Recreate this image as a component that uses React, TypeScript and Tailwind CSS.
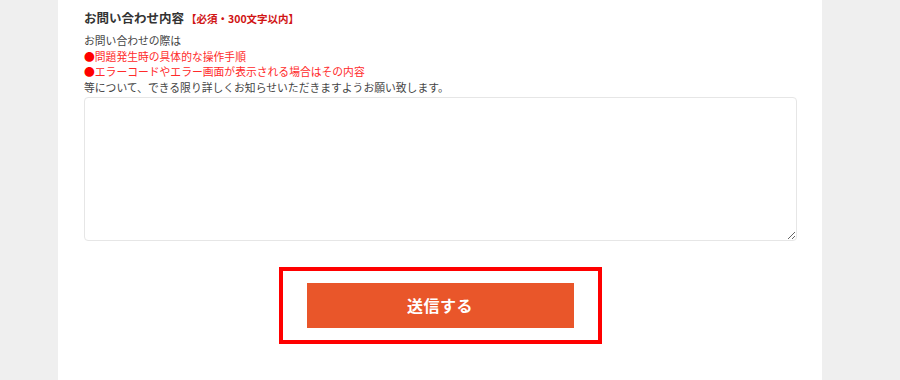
import React from 'react';

const notes = ['問題発生時の具体的な操作手順', 'エラーコードやエラー画面が表示される場合はその内容'];

const App: React.FC = () => {
  return (
    <div
      className="w-[900px] h-[380px] bg-[#efefef] overflow-hidden"
      style={{ fontFamily: '"Noto Sans CJK JP", "Noto Sans", sans-serif' }}
    >
      <div className="ml-[58px] w-[764px] h-full bg-white px-[26px] pt-[9px]">
        <h3 className="flex items-baseline text-[12.5px] font-bold text-[#333] leading-[18px]">
          お問い合わせ内容
          <span className="ml-[2px] text-[10.5px] text-[#d01414]">【必須・300文字以内】</span>
        </h3>

        <div className="mt-[5px] text-[10.8px] leading-[15.7px] text-[#444]">
          <p>お問い合わせの際は</p>
          {notes.map((n) => (
            <p key={n} className="text-[#ff2a2a]">
              <span className="text-[#f00]">●</span>
              {n}
            </p>
          ))}
          <p>等について、できる限り詳しくお知らせいただきますようお願い致します。</p>
        </div>

        <textarea
          className="block mt-[1px] w-[713px] h-[144px] border border-[#e6e6e6] rounded-[4px] bg-white outline-none"
          aria-label="お問い合わせ内容"
        />

        <div className="flex justify-center mt-[26px]">
          <div className="border-[4px] border-[#ff0000] px-[24px] py-[12px]">
            <button className="block w-[267px] h-[45px] bg-[#e9562a] text-white text-[16px] font-bold tracking-[0.5px]">
              送信する
            </button>
          </div>
        </div>
      </div>
    </div>
  );
};

export default App;
